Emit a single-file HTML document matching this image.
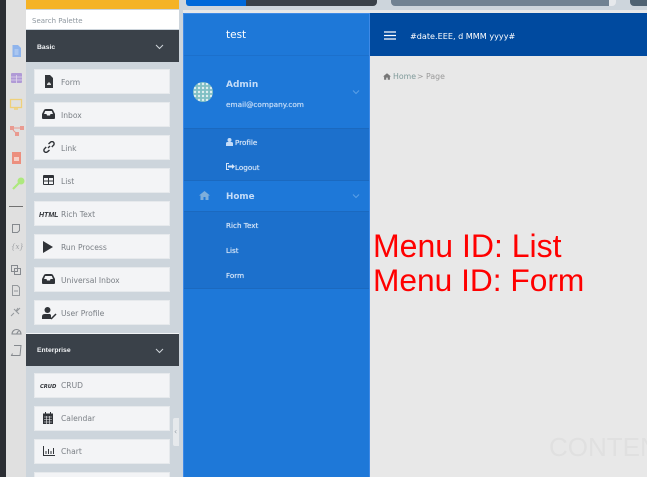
<!DOCTYPE html>
<html><head><meta charset="utf-8">
<style>
*{box-sizing:border-box}
html,body{margin:0;padding:0;width:647px;height:477px;overflow:hidden;background:#cdd5dc;font-family:"DejaVu Sans","Liberation Sans",sans-serif}
#root{position:absolute;left:0;top:0;width:647px;height:477px;overflow:hidden;background:#cdd5dc}
.a{position:absolute}
.t{position:absolute;white-space:nowrap;line-height:12px}
.item{position:absolute;left:34px;width:136px;height:25px;background:#f3f4f6;border:1px solid #e6e9ec}
.item span{position:absolute;left:26px;top:7px;font-size:7.600px;line-height:12px;color:#7a7f85;white-space:nowrap}
.item svg{position:absolute}
.m{position:absolute;color:#cfe3fa;white-space:nowrap;line-height:12px}
.s{text-shadow:0 0 .6px #d5e5f8}
.h{position:absolute;font-family:"Liberation Sans",sans-serif;font-size:6.800px;font-weight:bold;color:#f2f4f6;white-space:nowrap;line-height:12px}
.red{position:absolute;left:373px;font-family:"Liberation Sans",sans-serif;font-size:31.700px;line-height:34px;color:#f00;white-space:nowrap}
svg{display:block}
</style></head><body><div id="root">
<div class="a" style="left:0;top:0;width:6px;height:477px;background:#2b2e33"></div>
<div class="a" style="left:6px;top:0;width:20px;height:477px;background:#e0e0e0"></div>

<svg class="a" style="left:6px;top:0" width="20" height="370" viewBox="0 0 20 370" fill="none">
<path d="M6.500 45h5.500l3 3v9H6.500z" fill="#8fb4ec"/><path d="M8.500 50h4M8.500 52h4M8.500 54h4" stroke="#d6e2f5" stroke-width=".7"/>
<rect x="5" y="73" width="11" height="10" rx="1" fill="#b09ad6"/><path d="M5 77h11M5 80h11M10.500 75v8" stroke="#e0d8ea" stroke-width=".8"/>
<rect x="4.500" y="99.500" width="11" height="8" stroke="#efd07a" stroke-width="1.300"/><path d="M8 109h4" stroke="#efd07a" stroke-width="1.500"/>
<rect x="4" y="126" width="4" height="4" fill="#e99a90"/><rect x="14" y="126" width="4" height="4" fill="#e99a90"/><rect x="9" y="132" width="4" height="4" fill="#e99a90"/><path d="M8 128h6M7 130l3 3" stroke="#e99a90"/>
<path d="M6 152h9v12H6z" fill="#ec8f7e"/><path d="M8 157h5v4H8z" fill="#f5d0c7"/>
<circle cx="15" cy="181" r="3.500" fill="#ade87e"/><path d="M13 183l-6 6" stroke="#ade87e" stroke-width="2.200"/>
<path d="M3 206.500h14" stroke="#555" stroke-width=".8"/>
<path d="M6.500 224.500h7v6l-2 2h-5z" stroke="#85898e"/>
<text x="5" y="249" font-family="DejaVu Serif,serif" font-style="italic" font-size="7" fill="#9a9da1">{x}</text>
<rect x="5.500" y="265.500" width="6" height="6" stroke="#85898e"/><rect x="8.500" y="268.500" width="6" height="6" stroke="#85898e"/>
<path d="M6.500 285.500h5l2 2v8h-7zM8 291h4" stroke="#94989c"/>
<path d="M5 316l3-3M8 309l5 5M10 312l4-4M12 308l-2 3" stroke="#94989c"/>
<path d="M6 334a4.500 4.500 0 1 1 9 0h-9zM10.500 334l2-3" stroke="#85898e" stroke-width="1.100"/>
<path d="M8 345.500h7l-1 10H5.500l1-2" stroke="#85898e"/>
</svg>

<div class="a" style="left:26px;top:0;width:153px;height:9px;background:#f5b327"></div>
<div class="a" style="left:26px;top:10px;width:153px;height:19px;background:#fff"></div>
<div class="t" style="left:32px;top:15px;font-size:7px;color:#8e979f">Search Palette</div>
<div class="a" style="left:26px;top:30px;width:153px;height:32px;background:#3a4149"></div>
<div class="h" style="left:37px;top:41.500px">Basic</div>
<svg class="a" style="left:155px;top:44px" width="9" height="6" fill="none"><path d="M1 1l3.500 3.500L8 1" stroke="#cfd5da"/></svg>

<div class="item" style="top:69px"><svg style="left:9px;top:5px" width="10" height="13" viewBox="0 0 10 13"><path d="M1 0h5l3 3v10H1z" fill="#33363a"/><path d="M3 9l2-2 2 2v1H3z" fill="#ddd"/></svg><span>Form</span></div>
<div class="item" style="top:102px"><svg style="left:7px;top:6px" width="13" height="10" viewBox="0 0 13 10"><path d="M0 5l2-4Q2.500 0 4 0h5q1.500 0 2 1l2 4v4q0 1-1 1H1q-1 0-1-1z" fill="#303338"/><path d="M2 5l1.200-3h6.600L11 5H8.500L8 6.500H5L4.500 5z" fill="#f3f4f6"/></svg><span>Inbox</span></div>
<div class="item" style="top:135px"><svg style="left:8px;top:5px" width="12" height="12" viewBox="0 0 12 12" fill="none" stroke="#303338" stroke-width="1.400"><path d="M5 7l2-2M5.500 3L7.500 1.200a2 2 0 0 1 3 3L8.800 6M6.500 9l-2 1.800a2 2 0 0 1-3-3L3.200 6"/></svg><span>Link</span></div>
<div class="item" style="top:168px"><svg style="left:8px;top:6px" width="11" height="10" viewBox="0 0 11 10"><rect width="11" height="10" rx="1" fill="#303338"/><path d="M1 3h4v2.500H1zM6 3h4v2.500H6zM1 6.500h4V9H1zM6 6.500h4V9H6z" fill="#f3f4f6"/></svg><span>List</span></div>
<div class="item" style="top:201px"><div class="t" style="left:4px;top:8px;font-family:'Liberation Sans',sans-serif;font-size:7px;font-weight:bold;font-style:italic;color:#303338">HTML</div><span>Rich Text</span></div>
<div class="item" style="top:234px"><svg style="left:8px;top:6px" width="11" height="12" viewBox="0 0 11 12"><path d="M0 0l10 6-10 6z" fill="#303338"/></svg><span>Run Process</span></div>
<div class="item" style="top:267px"><svg style="left:7px;top:6px" width="13" height="10" viewBox="0 0 13 10"><path d="M0 5l2-4Q2.500 0 4 0h5q1.500 0 2 1l2 4v4q0 1-1 1H1q-1 0-1-1z" fill="#303338"/><path d="M2 5l1.200-3h6.600L11 5H8.500L8 6.500H5L4.500 5z" fill="#f3f4f6"/></svg><span>Universal Inbox</span></div>
<div class="item" style="top:300px"><svg style="left:7px;top:6px" width="15" height="13" viewBox="0 0 15 13"><circle cx="5.500" cy="3" r="3" fill="#303338"/><path d="M0 12V9.500Q0 7 3 7h5l1 1v4z" fill="#303338"/><path d="M9 12l5-5" stroke="#303338" stroke-width="1.500"/></svg><span>User Profile</span></div>

<div class="a" style="left:26px;top:333px;width:153px;height:1px;background:#f2f4f6"></div>
<div class="a" style="left:26px;top:334px;width:153px;height:32px;background:#3a4149"></div>
<div class="h" style="left:37px;top:344.500px">Enterprise</div>
<svg class="a" style="left:155px;top:348px" width="9" height="6" fill="none"><path d="M1 1l3.500 3.500L8 1" stroke="#cfd5da"/></svg>

<div class="item" style="top:373px"><div class="t" style="left:5px;top:7px;font-size:5.200px;font-weight:bold;font-style:italic;color:#303338">CRUD</div><span style="top:6px">CRUD</span></div>
<div class="item" style="top:406px"><svg style="left:8px;top:5px" width="10" height="12" viewBox="0 0 10 12"><path d="M0 1.500h10V12H0z" fill="#303338"/><path d="M2 0h1v3H2zM7 0h1v3H7z" fill="#303338"/><path d="M1 5h8M1 7.500h8M1 10h8M3.500 4v8M6.500 4v8" stroke="#f3f4f6" stroke-width=".6"/></svg><span style="top:6px">Calendar</span></div>
<div class="item" style="top:439px"><svg style="left:8px;top:6px" width="12" height="10" viewBox="0 0 12 10" fill="none" stroke="#303338"><path d="M.5 0v9.500H12"/><path d="M3 8V5M5.500 8V3M8 8V5M10.500 8V2"/></svg><span style="top:6px">Chart</span></div>
<div class="item" style="top:472px;height:5px;border-bottom:0"></div>

<div class="a" style="left:173px;top:418px;width:6px;height:28px;background:#e6e9ec;border-radius:2px 0 0 2px"></div>
<div class="t" style="left:174px;top:426px;font-size:8px;color:#9aa3ab">‹</div>

<!-- top strip -->
<div class="a" style="left:186px;top:0;width:60px;height:6px;background:#0069d9;border-radius:0 0 0 3px"></div>
<div class="a" style="left:246px;top:0;width:131px;height:6px;background:#3a4149;border-radius:0 0 4px 0"></div>
<div class="a" style="left:391px;top:0;width:218px;height:6px;background:#718292;border-radius:0 0 0 4px"></div>
<div class="a" style="left:609px;top:0;width:7px;height:6px;background:#e6e9ec;border-radius:0 0 4px 0"></div>
<div class="a" style="left:630px;top:0;width:17px;height:6px;background:#4f6272;border-radius:0 0 0 4px"></div>

<!-- main -->
<div class="a" style="left:179px;top:0;width:4px;height:477px;background:#cdd5dc"></div>
<div class="a" style="left:183px;top:10px;width:464px;height:467px;background:#e8e8e8"></div>

<!-- sidebar -->
<div class="a" style="left:183px;top:13px;width:187px;height:464px;background:#1e78d8;border-left:1px solid #3f8ae6;border-right:1px solid #3f8ae6;border-top:1px solid #3f8ae6"></div>
<div class="a" style="left:184px;top:55px;width:185px;height:1px;background:#1c70cc"></div>
<div class="t" style="left:226px;top:29px;font-size:10.500px;color:#fff">test</div>
<svg class="a" style="left:193px;top:82px" width="20" height="20" viewBox="0 0 20 20"><defs><pattern id="p" width="4" height="4" patternUnits="userSpaceOnUse"><rect width="4" height="4" fill="#7fbfc4"/><circle cx="2" cy="2" r="1.200" fill="#dfeef0"/></pattern></defs><circle cx="10" cy="10" r="10" fill="url(#p)"/></svg>
<div class="m" style="left:226px;top:79px;font-size:9px;font-weight:bold;color:#c4dcf8">Admin</div>
<div class="m s" style="left:226px;top:99px;font-size:7.300px;color:#c4dcf8">email@company.com</div>
<svg class="a" style="left:352px;top:90px" width="8" height="5" fill="none"><path d="M1 .5l3 3 3-3" stroke="#5b9fe6"/></svg>

<div class="a" style="left:184px;top:128px;width:185px;height:52px;background:#1c70cc;border-top:1px solid #1b69bf"></div>
<div class="a" style="left:184px;top:180px;width:185px;height:1px;background:#1b69bf"></div>
<svg class="a" style="left:226px;top:138px" width="7" height="8" viewBox="0 0 7 8"><circle cx="3.500" cy="2" r="2" fill="#c4dcf8"/><path d="M0 8V5.500Q0 4 1.500 4h4Q7 4 7 5.500V8z" fill="#c4dcf8"/></svg>
<div class="m s" style="left:235px;top:137px;font-size:7.200px;color:#d5e5f8">Profile</div>
<svg class="a" style="left:226px;top:163px" width="9" height="7" viewBox="0 0 9 7" fill="none"><path d="M3 .5H.5v6H3" stroke="#d5e5f8"/><path d="M2 2.500h4V1l3 2.500L6 6V4.500H2z" fill="#d5e5f8"/></svg>
<div class="m s" style="left:235px;top:162px;font-size:7.200px;color:#d5e5f8">Logout</div>

<svg class="a" style="left:199px;top:191px" width="11" height="9" viewBox="0 0 11 9"><path d="M5.500 0L11 4.500h-1.500V9H6.500V6h-2v3h-3V4.500H0z" fill="#7eaedb"/></svg>
<div class="m" style="left:226px;top:191px;font-size:8.800px;font-weight:bold;color:#c4dcf8">Home</div>
<svg class="a" style="left:352px;top:194px" width="8" height="5" fill="none"><path d="M1 .5l3 3 3-3" stroke="#5b9fe6"/></svg>

<div class="a" style="left:184px;top:211px;width:185px;height:78px;background:#1c70cc;border-top:1px solid #1b69bf;border-bottom:1px solid #1b69bf"></div>
<div class="m s" style="left:226px;top:220px;font-size:7.200px;color:#d5e5f8">Rich Text</div>
<div class="m s" style="left:226px;top:245px;font-size:7.200px;color:#d5e5f8">List</div>
<div class="m s" style="left:226px;top:270px;font-size:7.200px;color:#d5e5f8">Form</div>

<!-- navbar -->
<div class="a" style="left:370px;top:13px;width:277px;height:43px;background:#004a9f"></div>
<svg class="a" style="left:384px;top:31px" width="12" height="9" fill="none" stroke="#fff" stroke-width="1.300"><path d="M0 1h12M0 4.500h12M0 8h12"/></svg>
<div class="t" style="left:410px;top:30px;font-size:8.100px;color:#fff">#date.EEE, d MMM yyyy#</div>

<svg class="a" style="left:383px;top:73px" width="8" height="7" viewBox="0 0 11 9"><path d="M5.500 0L11 4.500h-1.500V9H6.500V6h-2v3h-3V4.500H0z" fill="#777"/></svg>
<div class="t" style="left:393px;top:71px;font-size:7.800px;color:#7f9a9a">Home</div>
<div class="t" style="left:417px;top:71px;font-size:7.800px;color:#999">&gt; Page</div>

<div class="red" style="top:229px;font-size:32px">Menu ID: List</div>
<div class="red" style="top:263px">Menu ID: Form</div>
<div class="t" style="left:549px;top:431px;font-family:'Liberation Sans',sans-serif;font-size:26px;line-height:32px;color:#e0e0e0">CONTENT</div>
</div></body></html>
